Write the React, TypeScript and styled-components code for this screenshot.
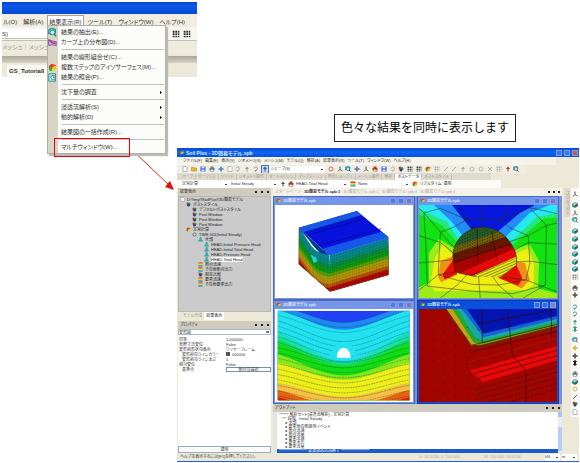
import React from "react";
import styled, { createGlobalStyle, css } from "styled-components";

const GlobalStyle = createGlobalStyle`
  * { box-sizing: border-box; }
  body { margin: 0; background: #fff; }
  button, select, input, table {
    font: inherit; color: inherit; margin: 0; padding: 0;
    border: 0; background: none; border-radius: 0; appearance: none;
  }
  button { white-space: nowrap; }
`;

const Page = styled.main`
  position: relative;
  display: flex;
  flex-direction: column;
  padding: 2px 1px 1px 2px;
  font-family: "Liberation Sans", "Noto Sans CJK JP", sans-serif;
  font-feature-settings: "palt";
  font-size: 4px;
  line-height: 6px;
  color: #333;
  white-space: nowrap;
`;

/* ---------- menu excerpt ---------- */
const TopRow = styled.div`
  display: flex;
  align-items: flex-start;
  height: 146px;
`;
const Excerpt = styled.section`
  position: relative;
  flex: 0 0 195px;
  height: 75px;
  font-size: 6px;
  line-height: 10px;
  background: #ece9d8;
`;
const ExcerptTitle = styled.div`
  height: 12px;
  background: linear-gradient(#0a40d0, #0a58e6 30%, #0848d4);
`;
const ExcerptMenuBar = styled.nav`
  display: flex;
  gap: 4px;
  height: 13px;
  padding-top: 2px;
  background: #f0eee2;
`;
const ExcerptMenu = styled.button<{ $open?: boolean }>`
  height: 11px;
  padding: 0 1px;
  ${(p) => p.$open && css`background: #fff; outline: 1px solid #a5a294;`}
`;
const ExcerptTools = styled.div`
  display: flex;
  justify-content: space-between;
  align-items: center;
  height: 13px;
  padding-right: 3px;
  background: #f6f5ee;
`;
const ExcerptField = styled.div`
  width: 46px;
  height: 10px;
  background: #fff;
  border-bottom: 1px solid #c5c2b2;
`;
const ToolCluster = styled.div`
  display: flex;
  gap: 3px;
  padding-right: 3px;
`;
const ExcerptTabs = styled.div`
  height: 13px;
  padding-top: 1px;
  color: #96948c;
  background: #eeebdf;
  border-top: 1px solid #c5c2b2;
`;
const ExcerptRule = styled.div`
  height: 7px;
  margin-top: 3px;
  background: linear-gradient(#aaa79b, #d5d2c5);
`;
const DocTab = styled.div`
  margin: 2px 0 0 5px;
  width: 56px;
  height: 12px;
  padding: 1px 2px;
  font-weight: bold;
  background: #fbfaf4;
`;
const Popup = styled.div`
  position: absolute;
  left: 45px;
  top: 23px;
  z-index: 1;
  width: 119px;
  padding: 1px 0;
  border: 1px solid #b3b0a2;
  background: linear-gradient(90deg, #d9d5c5 10px, #fcfcfa 10px);
  box-shadow: 2px 2px 1px #bbb;
`;
const PopupItem = styled.button`
  position: relative;
  display: grid;
  grid-template-columns: 13px 1fr 5px;
  align-items: center;
  width: 100%;
  height: 10px;
  text-align: left;
  line-height: 10px;
`;
const Separator = styled.hr`
  height: 1px;
  margin: 2px 1px 2px 14px;
  border: 0;
  background: #c2c0b8;
`;
const Highlight = styled.span`
  position: absolute;
  left: 6px;
  top: -4px;
  width: 76px;
  height: 19px;
  border: 1px solid #e80000;
`;
const Callout = styled.p`
  margin: 112px 0 0 137px;
  padding: 0 6px;
  height: 28px;
  border: 1px solid #222;
  font-size: 12px;
  line-height: 26px;
  font-feature-settings: normal;
  color: #000;
`;
const Arrow = styled.svg`
  position: absolute;
  left: 128px;
  top: 146px;
`;

/* ---------- application window ---------- */
const AppWindow = styled.section`
  display: flex;
  flex-direction: column;
  margin-left: 175px;
  background: #ece9d8;
  border-bottom: 1px solid #2462d8;
`;
const TitleBar = styled.header`
  display: flex;
  align-items: center;
  gap: 2px;
  height: 9px;
  padding: 0 1px 0 2px;
  color: #dce8ff;
  font-size: 5px;
  font-weight: bold;
  background: linear-gradient(#0a48d8, #0a66f2 50%, #0850dc);
`;
const Spacer = styled.span`
  flex: 1;
`;
const WinButton = styled.button<{ $tone: string }>`
  width: 6px;
  height: 6px;
  border: 1px solid #7f9fee;
  background: ${(p) => p.$tone};
`;
const MenuBar = styled.nav`
  display: flex;
  align-items: center;
  gap: 3px;
  height: 8px;
  margin-right: 23px;
  padding-left: 6px;
  background: #f5f3ea;
`;
const Bar = styled.div<{ $white?: boolean }>`
  display: flex;
  align-items: center;
  gap: 2px;
  height: 8px;
  padding: 0 5px;
  margin-right: ${(p) => (p.$white ? 78 : 54)}px;
  background: ${(p) => (p.$white ? "#fbfaf5" : "#f0eee3")};
`;
const RibbonTabs = styled.div`
  display: flex;
  align-items: center;
  height: 7px;
  padding-left: 3px;
  color: #99978e;
  background: linear-gradient(90deg, #dedbce 78%, #ece9d8 78%);
`;
const RibbonTab = styled.button<{ $on?: boolean }>`
  height: 6px;
  padding: 0 2px;
  border-right: 1px solid #c4c1b3;
  ${(p) => p.$on && css`background: #fff; color: #222;`}
`;
const Combo = styled.select<{ $w: number }>`
  width: ${(p) => p.$w}px;
  height: 7px;
  line-height: 6px;
  background:
    linear-gradient(#444, #444) right 2px center / 2px 1px no-repeat,
    #fff;
`;
const IconButton = styled.button<{ $on?: boolean }>`
  display: grid;
  place-items: center;
  width: 7px;
  height: 7px;
  ${(p) => p.$on && css`background: #c4d2ef; outline: 1px solid #5577bb;`}
`;
const Body = styled.div`
  display: grid;
  grid-template-columns: 94px minmax(0, 1fr) 15px;
  column-gap: 2px;
  height: 265px;
`;
const LeftPane = styled.aside`
  display: flex;
  flex-direction: column;
  padding-left: 1px;
`;
const PaneHead = styled.div`
  display: flex;
  align-items: center;
  gap: 4px;
  flex: none;
  height: 8px;
  padding: 0 2px;
  background: #cfccbf;
  color: #222;
`;
const PaneButton = styled.button`
  width: 2px;
  height: 2px;
  background: #222;
`;
const Tree = styled.ul`
  list-style: none;
  margin: 0;
  padding: 0 0 0 1px;
  height: 116px;
  border: 1px solid #b8b8b4;
  background: #cbcbcb;
`;
const TreeRow = styled.li<{ $depth: number }>`
  display: flex;
  align-items: center;
  gap: 2px;
  height: 5px;
  line-height: 5px;
  padding-left: ${(p) => p.$depth * 6}px;
  color: #222;
`;
const TreeLabel = styled.span<{ $on?: boolean }>`
  ${(p) => p.$on && css`background: #fff;`}
`;
const PaneTabs = styled.div`
  display: flex;
  height: 9px;
  padding: 0 3px;
  color: #96948c;
`;
const PaneTab = styled.button<{ $on?: boolean }>`
  padding: 0 2px;
  height: 8px;
  ${(p) => p.$on && css`background: #fff; color: #222;`}
`;
const PropSelect = styled.select`
  flex: none;
  height: 6px;
  line-height: 5px;
  border: 1px solid #a9b8c9;
  background: linear-gradient(#777, #777) right 1px center / 3px 2px no-repeat, #fff;
`;
const PropArea = styled.div`
  flex: 1;
  padding-top: 2px;
  background: #fff;
`;
const PropTable = styled.table`
  width: 100%;
  border-collapse: collapse;
  line-height: 5px;
`;
const PropName = styled.th<{ $sub?: boolean }>`
  width: 48px;
  height: 5px;
  padding: 0 0 0 ${(p) => (p.$sub ? 4 : 1)}px;
  font-weight: normal;
  text-align: left;
`;
const PropValue = styled.td`
  padding: 0;
`;
const Swatch = styled.span`
  display: inline-block;
  width: 4px;
  height: 4px;
  margin-right: 2px;
  background: #555;
`;
const PickButton = styled.button`
  display: block;
  width: 100%;
  height: 5px;
  line-height: 3px;
  border: 1px solid #7890b0;
`;
const ApplyButton = styled.button`
  flex: none;
  height: 7px;
  line-height: 5px;
  border: 1px solid #9aacbf;
  background: #fafafa;
`;
const Centre = styled.div`
  display: flex;
  flex-direction: column;
`;
const DocTabs = styled.div`
  display: flex;
  align-items: center;
  gap: 3px;
  height: 8px;
  padding: 0 2px;
  color: #aaa89f;
  background: #f4f2e8;
`;
const OpenTab = styled.button<{ $on?: boolean }>`
  ${(p) => p.$on && css`color: #222; font-weight: bold; background: #fff;`}
`;
const Mdi = styled.div`
  display: grid;
  grid-template-columns: 1fr 1fr;
  grid-template-rows: 104px 104px;
  column-gap: 2px;
  padding-right: 3px;
  background: #7890d8;
`;
const Child = styled.article<{ $active?: boolean }>`
  display: flex;
  flex-direction: column;
  padding: 0 2px 2px;
  background: ${(p) => (p.$active ? "#0a50dc" : "#7595e8")};
  box-shadow: inset 0 0 0 1px ${(p) => (p.$active ? "#0940b8" : "#4d68bd")};
`;
const ChildBar = styled.header`
  display: flex;
  align-items: center;
  gap: 2px;
  flex: none;
  height: 9px;
  padding: 0 1px;
  color: #dfe7ff;
  font-weight: bold;
`;
const Plot = styled.svg`
  display: block;
  flex: 1;
  width: 100%;
  min-height: 0;
  background: #fff;
`;
const Output = styled.div`
  flex: 1;
  display: grid;
  grid-template-columns: 4px 1fr 4px;
  overflow: hidden;
  background: #fff;
`;
const OutGutter = styled.div`
  background: #e4e4e0;
`;
const OutLines = styled.ol`
  list-style: none;
  margin: 0;
  padding: 1px 0 0;
`;
const OutLine = styled.li<{ $indent: number; $on?: boolean }>`
  height: 4px;
  line-height: 4px;
  padding-left: ${(p) => p.$indent}px;
  color: #333;
  ${(p) => p.$on && css`background: #1c5bcc; color: #fff;`}
`;
const Scroll = styled.div`
  display: flex;
  flex-direction: column;
  justify-content: flex-end;
  background: #e6eefc;
  border-top: 5px solid #aac4f2;
`;
const Thumb = styled.div`
  height: 24px;
  margin-bottom: 2px;
  background: #b5ccf7;
`;
const RightRail = styled.aside`
  display: flex;
  justify-content: space-between;
`;
const RailTab = styled.button`
  width: 6px;
  height: 29px;
  background: #dddacd;
  color: #888;
  writing-mode: vertical-rl;
  line-height: 6px;
`;
const RailIcons = styled.div`
  display: flex;
  flex-direction: column;
  align-items: center;
  justify-content: space-between;
  width: 8px;
  height: 229px;
  padding: 3px 0 2px;
  background: #faf9f4;
`;
const Gap = styled.span`
  flex: 0 0 2px;
`;
const Status = styled.footer`
  display: flex;
  align-items: center;
  gap: 24px;
  height: 8px;
  padding: 0 2px 0 3px;
`;
const Coord = styled.span`
  color: #a9a79c;
`;
const Units = styled.div`
  display: flex;
  gap: 2px;
`;

/* ---------- icons ---------- */
type Kind =
  | "logo" | "cube" | "grid" | "doc" | "folder" | "disk" | "print" | "arrow"
  | "line" | "ring" | "cross" | "tree" | "bands" | "dots" | "axes" | "turn" | "up" | "lens" | "pan" | "curve" | "query";

function Icon({ kind, size = 6, tone = "#4a5568" }: { kind: Kind; size?: number; tone?: string }) {
  const art: Record<Kind, React.ReactNode> = {
    logo: <><path d="M1 4 5 1l6 2-3 5H2z" fill="#e83c28" /><path d="M1 6 5 5v6L2 10z" fill="#18a848" /><path d="m5 6 6-3v5l-5 3z" fill="#f0c818" /></>,
    cube: <><path d="m1 4 5-3 5 2-5 3z" fill="#9eeef0" /><path d="m1 4 5 2v5L1 9z" fill={tone} /><path d="m6 6 5-3v5l-5 3z" fill="#087078" /><path d="m1 4 5-3 5 2v5l-5 3-5-2z" fill="none" stroke="#234" /></>,
    grid: <><path d="M1 1h10v10H1z" fill="#fff" /><path d="M1 1h3v3H1zM5 1h3v3H5zM9 1h2v3H9zM1 5h3v3H1zM5 5h3v3H5zM9 5h2v3H9zM1 9h3v2H1zM5 9h3v2H5zM9 9h2v2H9z" fill={tone} /></>,
    doc: <path d="M2 1h6l2 2v8H2z" fill="#fff" stroke="#678" />,
    folder: <path d="M1 3h4l1 1h5v6H1z" fill="#f0b830" stroke="#a87008" />,
    disk: <><path d="M1 1h10v10H1z" fill="#2558c8" /><path d="M3 1h6v4H3zM3 7h6v4H3z" fill="#dce8ff" /></>,
    print: <><path d="M3 1h6v3H3zM1 4h10v5H1z" fill={tone} /><path d="M3 7h6v4H3z" fill="#fff" stroke={tone} /></>,
    arrow: <path d="m6 1 4 5H7v5H5V6H2z" fill={tone} />,
    line: <path d="M2 10 10 2" stroke={tone} strokeWidth="2" />,
    ring: <circle cx="6" cy="6" r="4" fill="none" stroke={tone} strokeWidth="1.5" />,
    cross: <path d="m2 2 8 8m0-8-8 8" stroke={tone} strokeWidth="2" />,
    tree: <path d="M5 1h3v4l3 5H1l3-4z" fill="#20c8b8" stroke="#287888" />,
    bands: <><path d="M1 1h10v3H1z" fill="#e83030" /><path d="M1 4h10v3H1z" fill="#f0e020" /><path d="M1 7h10v2H1z" fill="#28c848" /><path d="M1 9h10v2H1z" fill="#2878e8" /></>,
    dots: <><circle cx="4" cy="4" r="3" fill="#d03028" /><circle cx="8" cy="5" r="3" fill="#20a040" /><circle cx="6" cy="8" r="3" fill="#223a98" /></>,
    axes: <><path d="M6 7V1" stroke="#2048d0" strokeWidth="2" /><path d="m6 7-4 4" stroke="#d02020" strokeWidth="2" /><path d="m6 7 5 3" stroke="#18a030" strokeWidth="2" /></>,
    turn: <><path d="M2 5c1-4 7-4 7 0 0 3-3 3-4 6" fill="none" stroke={tone} strokeWidth="2" /><path d="M2 8h6l-3 3z" fill={tone} /></>,
    up: <path d="m6 0 5 4H8v4h3l-5 4-5-4h3V4H1z" fill={tone} />,
    lens: <><path d="M0 3 5 0l5 2v5L5 9 0 7z" fill="#3cc8cc" stroke="#18686c" /><circle cx="6" cy="6" r="3" fill="#e8f4fa" stroke={tone} /><path d="m8 8 3 3" stroke={tone} strokeWidth="2" /></>,
    pan: <path d="M6 0 8 3H7v2h2V4l3 2-3 2V7H7v2h1l-2 3-2-3h1V7H3v1L0 6l3-2v1h2V3H4z" fill={tone} />,
    curve: <><path d="M0 2 6 4l5 1v5l-5-1-5 1z" fill="#b8a8e8" stroke="#6048b0" /><path d="M1 3c3 0 3 5 9 4" fill="none" stroke="#d03048" strokeWidth="2" /></>,
    query: <><path d="M1 1h9v10H1z" fill="#a8e8ec" stroke="#187880" /><circle cx="7" cy="6" r="3" fill="#fff" stroke="#187880" /><path d="M7 4v2h2" fill="none" stroke="#234" /></>,
  };
  return <svg width={size} height={size} viewBox="0 0 12 12" aria-hidden="true">{art[kind]}</svg>;
}

/* ---------- contour plots ---------- */
const range = (n: number) => Array.from({ length: n }, (_, i) => i);

function BlockPlot() {
  const tones = ["#08889c", "#0a8a78", "#0a8c40", "#0b9a12", "#5c9c08", "#a89c08", "#c08a08", "#b85408", "#b00808"];
  const at = [0, 15, 28, 40, 54, 64, 74, 86, 96];
  return (
    <Plot viewBox="20 62 418 277" preserveAspectRatio="none" role="img" aria-label="地盤モデル">
      <defs>
        <clipPath id="blockLeft"><path d="M92 130 185 212 187 320 92 238z" /></clipPath>
        <clipPath id="blockRight"><path d="M185 212 364 158V270L187 320z" /></clipPath>
      </defs>
      <g clipPath="url(#blockRight)">
        {tones.map((c, i) => <path key={c} d={`M185 ${212 + at[i]} 366 ${157 + at[i]}V400H185z`} fill={c} />)}
        {range(13).map((i) => <path key={i} d={`M185 ${218 + i * 8} 366 ${164 + i * 8}`} stroke="#15382c" strokeWidth="2" strokeDasharray="4 3" opacity=".4" />)}
        {range(17).map((i) => <path key={i} d={`M${196 + i * 10} 140V340`} stroke="#15382c" opacity=".25" />)}
      </g>
      <g clipPath="url(#blockLeft)">
        {tones.map((c, i) => <path key={c} d={`M90 ${126 + at[i]}C120 ${165 + at[i]} 132 ${196 + at[i] * 0.9} 152 ${201 + at[i]}S175 ${208 + at[i]} 190 ${214 + at[i]}V400H90z`} fill={c} />)}
        <path d="M92 130 185 212 160 206C135 190 128 165 92 134z" fill="#083c90" />
        <path d="M128 210 145 218 148 231 137 234z" fill="#28dce0" />
        {range(13).map((i) => <path key={i} d={`M92 ${138 + i * 8}Q130 ${185 + i * 8} 187 ${219 + i * 8}`} fill="none" stroke="#153c40" strokeWidth="2" strokeDasharray="4 3" opacity=".35" />)}
        {range(8).map((i) => <path key={i} d={`M${102 + i * 11} 130V320`} stroke="#153c40" opacity=".3" />)}
      </g>
      <path d="M92 130 268 80 364 158 185 212z" fill="#0712df" />
      <path d="M92 130 268 80 284 93 108 144z" fill="#1557e8" />
      <path d="M164 192 344 142 364 158 185 212z" fill="#1557e8" />
      <path d="M108 144 284 93M118 153 294 101M150 184 342 133" stroke="#06087c" strokeWidth="2" fill="none" />
      <path d="M92 130V238L187 320 364 270V158" fill="none" stroke="#703038" />
    </Plot>
  );
}

function TunnelPlot() {
  return (
    <Plot viewBox="15 65 417 273" preserveAspectRatio="none" role="img" aria-label="トンネル断面">
      <defs><clipPath id="bore"><path d="M117 215C120 165 160 130 205 130S285 155 305 200Q313 222 309 242L262 277 190 276 123 262z" /></clipPath></defs>
      <path d="M0 0h450v400H0z" fill="#12e212" />
      <path d="M0 45H450V100L390 105 290 190 130 175 85 125 0 85z" fill="#24e87c" />
      <path d="M15 65H432V88L370 100 285 180H145L100 115 15 75z" fill="#25eaf4" />
      <path d="M60 65H410L350 88 270 165H155L112 112z" fill="#248cf8" />
      <path d="M115 65H365L318 90 250 145H180z" fill="#0716dc" />
      <path d="M15 308 45 290 45 205 75 165 118 190 300 195 350 180 378 230 375 310 432 325V338H15z" fill="#9dec18" />
      <path d="M48 303 62 225 87 180 120 215 305 210 343 193 362 235 362 300 338 315 65 318z" fill="#eeee12" />
      <path d="M73 277 80 230 118 215V275L82 292zM307 230 335 235 350 285 325 310 260 280z" fill="#f09018" />
      <path d="M87 268 119 225 130 268 92 284zM307 235 327 280 315 302 255 279z" fill="#e60c08" />
      <g clipPath="url(#bore)">
        <path d="M100 100H330V300H100z" fill="#a40500" />
        <path d="M100 110H320V132L110 205z" fill="#245c28" />
        <path d="M100 195 320 122V148L105 222z" fill="#746000" />
        <path d="M100 214 315 146V174L105 238z" fill="#651600" />
        <path d="M130 268 315 188V218L140 280z" fill="#e40a08" />
        <path d="M160 280 315 214V245L260 280z" fill="#e6e418" />
        {range(6).map((i) => <path key={i} d={`M${165 + i * 20} 280 315 ${218 + i * 8}`} stroke="#656810" strokeWidth="2" />)}
        {range(8).map((i) => <path key={i} d={`M115 ${162 + i * 8} 300 ${95 + i * 8}`} stroke="#183020" strokeWidth="3" strokeDasharray="3 5" />)}
        <path d="M190 135 193 230M235 145 250 225M120 235 305 175" stroke="#400" strokeWidth="2" />
      </g>
      <g fill="none" stroke="#203018" strokeWidth="2" opacity=".75">
        <path d="M117 215C120 165 160 130 205 130S285 155 305 200Q313 222 309 242L262 277M123 262 190 276M123 262 117 215" />
        <path d="M30 88 80 75 160 108 205 104 260 110 348 72 400 125 397 300 330 338M30 88 36 180 40 303 175 318 300 325 397 300" />
        <path d="M80 145 120 130 160 108 180 135M80 145 75 225 73 270 175 298 255 300 338 285 350 235 345 155 290 132 260 110 232 136" />
        <path d="M15 75 30 88 80 145 121 190M15 155 80 175 118 205M15 235 75 230 117 225M15 315 73 270 123 262M80 338 130 300 160 270M200 338 195 276M300 338 255 300 240 278M432 320 338 285 270 277M432 240 350 230 309 232M432 180 345 175 303 198M432 118 400 125 345 155 290 172M135 65 160 108M205 65V130M290 65 260 110M348 72 432 90" />
      </g>
    </Plot>
  );
}

const dip = (left: number, mid: number) =>
  `M28 ${left}C95 ${left + (mid - left) * 0.3} 160 ${mid} 228 ${mid}S361 ${left + (mid - left) * 0.3} 428 ${left}`;

function SectionPlot() {
  const layers: [string, number, number][] = [
    ["#1e88f4", 30, 83], ["#22e2f2", 44, 105], ["#18e0b0", 110, 197], ["#12dc50", 132, 207], ["#10dc12", 145, 214],
    ["#86e81c", 178, 241], ["#eeee18", 202, 254], ["#f8c040", 262, 304], ["#e86010", 284, 334], ["#e01808", 306, 352],
  ];
  return (
    <Plot viewBox="20 43 418 277" preserveAspectRatio="none" role="img" aria-label="浸透流断面">
      <defs><clipPath id="section"><path d="M28 48H428V315H28z" /></clipPath></defs>
      <g clipPath="url(#section)">
        <path d="M28 48H428V315H28z" fill="#2040f4" />
        {layers.map(([c, l, m]) => <path key={c} d={`${dip(l, m)}V400H28z`} fill={c} />)}
        {range(18).map((i) => <path key={i} d={dip(30 + i * 16, 83 + i * 15 + (i > 2 && i < 8 ? 12 : 0))} fill="none" stroke="#185048" strokeWidth="2" strokeDasharray={i % 2 ? "6 2" : "3 2"} opacity=".65" />)}
        <path d="M185 182Q205 140 228 140T271 182" fill="#22e2f2" />
      </g>
      <path d="M207 188C207 150 249 150 249 188z" fill="#fff" />
    </Plot>
  );
}

function CornerPlot() {
  return (
    <Plot viewBox="15 45 417 277" preserveAspectRatio="none" role="img" aria-label="拡大表示">
      <path d="M0 0h450v400H0z" fill="#a00500" />
      <path d="M94 45H432V103L205 158 170 158z" fill="#682800" />
      <path d="M98 45H432V94L208 151 174 153z" fill="#c8a010" />
      <path d="M116 45H432V91L208 149 180 145z" fill="#20a830" />
      <path d="M130 45H432V83L210 139 190 135z" fill="#18a8a8" />
      <path d="M144 45H432V75L210 129z" fill="#1860d8" />
      <path d="M160 45H432V66L210 118z" fill="#0414b0" />
      <path d="M168 228 432 155V198L208 263z" fill="#e80808" />
      <g fill="none" stroke="#3a0805" strokeWidth="2">
        <path d="M174 153 432 91M206 45V145M190 90 432 45M282 45 298 185 338 228V322M415 45V130M168 174 432 112" />
        <path d="M182 237 432 168M195 250 432 184" />
        <path d="M168 202 432 132" stroke="#b03828" strokeDasharray="3 4" />
        {range(5).map((i) => <path key={i} d={`M${185 + i * 8} ${285 + i * 14} 432 ${216 + i * 17}`} strokeDasharray="9 5" />)}
        {range(6).map((i) => <path key={i} d={`M${24 + i * 34} ${70 + i * 7}V322`} strokeDasharray="3 27" />)}
      </g>
    </Plot>
  );
}

/* ---------- data ---------- */
type Entry = { icon?: Kind; text: string; more?: boolean; mark?: boolean };
const popup: Entry[][] = [
  [{ icon: "lens", text: "結果の抽出(E)..." }, { icon: "curve", text: "カーブ上の分布図(D)..." }],
  [{ text: "結果の線形組合せ(C)..." }, { icon: "logo", text: "複数ステップのアイソサーフェス(M)..." }, { icon: "query", text: "結果の照会(P)..." }],
  [{ text: "沈下量の調査", more: true }],
  [{ text: "浸透流解析(S)", more: true }, { text: "動的解析(D)", more: true }],
  [{ text: "結果図の一括作成(R)..." }],
  [{ text: "マルチウィンドウ(W)...", mark: true }],
];
const menus = ["ファイル(F)", "編集(E)", "表示(V)", "ジオメトリ(G)", "メッシュ(M)", "モデル(Q)", "解析(A)", "結果表示(R)", "ツール(T)", "ウィンドウ(W)", "ヘルプ(H)"];
const ribbon = ["カーブ", "サーフェス", "ソリッド", "ジオメトリ操作", "オートメッシュ", "マップメッシュ", "押出しメッシュ", "メッシュ操作", "解析", "ポストデータ", "ポストスタイル"];
const tree: [number, Kind, string][] = [
  [0, "doc", "D:¥tmp¥SoilPlus¥3D簡易モデル"], [1, "dots", "ポストスタイル"], [2, "dots", "デフォルトポストスタイル"],
  [2, "dots", "Post Window"], [2, "dots", "Post Window"], [2, "dots", "Post Window"], [1, "logo", "定常計算"],
  [2, "ring", "TIME 001(Initial Steady)"], [3, "tree", "水頭"], [4, "tree", "HEAD-Initial Pressure Head"],
  [4, "tree", "HEAD-Initial Total Head"], [4, "tree", "HEAD-Pressure Head"], [4, "tree", "HEAD-Total Head"],
  [3, "bands", "節点流速"], [3, "bands", "その他節点出力"], [3, "dots", "相互比較"], [3, "bands", "要素流速"], [3, "bands", "その他要素出力"],
];
const props: [string, string, boolean][] = [
  ["倍率", "1.000000", false], ["実際寸法変位", "False", false], ["変形前形状の表示", "ワイヤーフレーム", false],
  ["変形前のラインカラー", "000000", true], ["変形前のライン太さ", "1", true], ["相対変位", "False", false], ["基準点", "節点の選択", true],
];
const output: [number, string][] = [
  [2, "****** 解析セット[浸透流解析] - 定常計算"], [5, "*** 段階 - Initial Steady"], [8, "● 水頭"], [8, "● 要素他の節接用イベント"],
  [8, "● 節点流速"], [8, "● 節点流量"], [8, "● 要素流速"], [8, "● 要素水圧"], [8, "● 要素流量"],
];
type Tool = [Kind, string];
const tools: Tool[] = [
  ["doc", "#456"], ["folder", "#456"], ["disk", "#456"], ["print", "#6a7890"], ["pan", "#3070c0"], ["doc", "#777"], ["turn", "#aaa"], ["arrow", "#999"], ["turn", "#999"],
];
const tools2: Tool[] = [
  ["ring", "#c04040"], ["axes", "#333"], ["lens", "#205090"], ["pan", "#3060a0"], ["axes", "#333"], ["print", "#b04020"], ["disk", "#333"], ["turn", "#aaa"], ["dots", "#333"],
  ["grid", "#444"], ["grid", "#444"], ["logo", "#333"], ["grid", "#aaa"], ["line", "#aaa"], ["line", "#aaa"], ["arrow", "#aaa"], ["ring", "#aaa"], ["ring", "#aaa"], ["cross", "#aaa"], ["grid", "#aaa"], ["arrow", "#b03030"], ["lens", "#804040"],
];
const rail: (Tool | null)[] = [
  ["axes", ""], null, ["cube", "#30c050"], ["axes", ""], ["lens", "#2070b0"], null, ["cube", "#20c0c8"], ["cube", "#20c0c8"], ["cube", "#20c0c8"], ["cube", "#20c0c8"],
  ["cube", "#20c0c8"], ["cube", "#20c0c8"], ["grid", "#889"], null, ["print", "#556"], ["pan", "#402818"], null, ["turn", "#2898b0"], ["turn", "#20a0a0"], ["arrow", "#20a870"],
  ["up", "#20a870"], null, ["lens", "#667"], ["pan", "#c8a818"], ["pan", "#222"], ["up", "#222"], null, ["print", "#678"], ["cube", "#109898"], ["ring", "#c8a010"], ["line", "#b04848"], ["dots", ""], ["doc", "#678"],
];

function Tools({ items, on }: { items: Tool[]; on?: number }) {
  return <>{items.map(([kind, tone], i) => <IconButton key={i} $on={i === on} aria-label={kind}><Icon kind={kind} tone={tone} /></IconButton>)}</>;
}
function PaneControls() {
  return <><Spacer /><PaneButton aria-label="メニュー" /><PaneButton aria-label="固定" /><PaneButton aria-label="閉じる" /></>;
}
function ChildWindow({ active, children }: { active?: boolean; children: React.ReactNode }) {
  const tone = active ? "#2b6df0" : "#5577d8";
  return (
    <Child $active={active}>
      <ChildBar>
        <Icon kind="logo" size={5} />3D簡易モデル.spb<Spacer />
        <WinButton $tone={tone} aria-label="最小化" /><WinButton $tone={tone} aria-label="最大化" /><WinButton $tone={active ? "#8a80b8" : "#8a70b0"} aria-label="閉じる" />
      </ChildBar>
      {children}
    </Child>
  );
}

export default function App() {
  return (
    <>
      <GlobalStyle />
      <Page>
        <TopRow>
          <Excerpt>
            <ExcerptTitle />
            <ExcerptMenuBar>
              <ExcerptMenu>ル(O)</ExcerptMenu><ExcerptMenu>解析(A)</ExcerptMenu><ExcerptMenu $open>結果表示(R)</ExcerptMenu>
              <ExcerptMenu>ツール(T)</ExcerptMenu><ExcerptMenu>ウィンドウ(W)</ExcerptMenu><ExcerptMenu>ヘルプ(H)</ExcerptMenu>
            </ExcerptMenuBar>
            <ExcerptTools>
              <ExcerptField>S)</ExcerptField>
              <ToolCluster><Icon kind="grid" size={8} tone="#333" /><Icon kind="grid" size={8} tone="#333" /></ToolCluster>
            </ExcerptTools>
            <ExcerptTabs>メッシュ｜メッシュ操作</ExcerptTabs>
            <ExcerptRule />
            <DocTab>GS_TutorialI</DocTab>
            <Popup role="menu">
              {popup.map((group, g) => (
                <React.Fragment key={g}>
                  {g > 0 && <Separator />}
                  {group.map((item) => (
                    <PopupItem key={item.text} role="menuitem">
                      {item.icon ? <Icon kind={item.icon} size={9} tone="#18808c" /> : <span />}
                      <span>{item.text}</span>
                      {item.more && <svg width="2" height="3" viewBox="0 0 2 3" aria-hidden="true"><path d="M0 0 2 1.5 0 3z" /></svg>}
                      {item.mark && <Highlight />}
                    </PopupItem>
                  ))}
                </React.Fragment>
              ))}
            </Popup>
          </Excerpt>
          <Callout>色々な結果を同時に表示します</Callout>
        </TopRow>

        <AppWindow>
          <TitleBar>
            <Icon kind="logo" size={5} />Soil Plus - 3D簡易モデル.spb<Spacer />
            <WinButton $tone="#3b74ea" aria-label="最小化" /><WinButton $tone="#3b74ea" aria-label="最大化" /><WinButton $tone="#e2502c" aria-label="閉じる" />
          </TitleBar>
          <MenuBar>{menus.map((m) => <button key={m}>{m}</button>)}</MenuBar>
          <Bar>
            <Tools items={tools} />
            <IconButton $on aria-label="選択"><Icon kind="arrow" tone="#2858a8" /></IconButton>
            <Combo $w={56} aria-label="選択対象"><option>シェープ(S)</option></Combo>
            <Tools items={tools2} />
          </Bar>
          <RibbonTabs>{ribbon.map((r) => <RibbonTab key={r} $on={r === "ポストデータ"}>{r}</RibbonTab>)}</RibbonTabs>
          <Bar $white>
            <Combo $w={47} aria-label="解析セット"><option>定常計算</option></Combo>
            <Combo $w={47} aria-label="段階"><option>Initial Steady</option></Combo>
            <Icon kind="arrow" /><Icon kind="print" tone="#a04040" />
            <Combo $w={52} aria-label="結果"><option>HEAD-Total Head</option></Combo>
            <Icon kind="bands" />
            <Combo $w={52} aria-label="ベクトル"><option>None</option></Combo>
            <Icon kind="logo" />
            <button>リアルタイム</button><button>適用</button>
          </Bar>
          <Body>
            <LeftPane>
              <PaneHead>結果表示<PaneControls /></PaneHead>
              <Tree>
                {tree.map(([depth, icon, label], i) => (
                  <TreeRow key={i} $depth={depth}><Icon kind={icon} size={5} tone="#456" /><TreeLabel $on={label === "HEAD-Total Head"}>{label}</TreeLabel></TreeRow>
                ))}
              </Tree>
              <PaneTabs><PaneTab>モデル作成</PaneTab><PaneTab $on>結果表示</PaneTab></PaneTabs>
              <PaneHead>プロパティ<PaneControls /></PaneHead>
              <PropSelect aria-label="プロパティ"><option>変形図</option></PropSelect>
              <PropArea>
                <PropTable>
                  <tbody>
                    {props.map(([name, value, sub]) => (
                      <tr key={name}>
                        <PropName $sub={sub} scope="row">{name}</PropName>
                        <PropValue>
                          {value === "000000" && <Swatch />}
                          {name === "基準点" ? <PickButton>{value}</PickButton> : value}
                        </PropValue>
                      </tr>
                    ))}
                  </tbody>
                </PropTable>
              </PropArea>
              <ApplyButton>適用</ApplyButton>
            </LeftPane>
            <Centre>
              <DocTabs>
                <OpenTab>スタートページ</OpenTab><OpenTab $on>3D簡易モデル.spb:1</OpenTab><OpenTab>3D簡易モデル.spb:2</OpenTab>
                <OpenTab>3D簡易モデル.spb:3</OpenTab><OpenTab>3D簡易モデル.spb:4</OpenTab><PaneControls />
              </DocTabs>
              <Mdi>
                <ChildWindow><BlockPlot /></ChildWindow>
                <ChildWindow><TunnelPlot /></ChildWindow>
                <ChildWindow><SectionPlot /></ChildWindow>
                <ChildWindow active><CornerPlot /></ChildWindow>
              </Mdi>
              <PaneHead>アウトプット<PaneControls /></PaneHead>
              <Output>
                <OutGutter />
                <OutLines>
                  {output.map(([indent, text]) => <OutLine key={text} $indent={indent}>{text}</OutLine>)}
                  <OutLine $indent={2} $on>****************** 結果読み込み終了 ******************</OutLine>
                </OutLines>
                <Scroll><Thumb /></Scroll>
              </Output>
            </Centre>
            <RightRail>
              <RailTab>プロジェクト</RailTab>
              <RailIcons>{rail.map((r, i) => (r ? <Icon key={i} kind={r[0]} tone={r[1]} size={6} /> : <Gap key={i} />))}</RailIcons>
            </RightRail>
          </Body>
          <Status>
            ヘルプを表示するには[F1]を押してください。<Spacer />
            <Coord>G: 30.5136, 0, 100.000</Coord><Coord>W: 100.000, 30.5136</Coord>
            <Units><Combo $w={15} aria-label="力の単位"><option>kN</option></Combo><Combo $w={15} aria-label="長さの単位"><option>m</option></Combo></Units>
          </Status>
        </AppWindow>
        <Arrow width="50" height="48" viewBox="0 0 50 48" aria-hidden="true">
          <path d="M1 1 42 40" stroke="#e02018" fill="none" />
          <path d="m46 44-9-3 5-6z" fill="#e01008" />
        </Arrow>
      </Page>
    </>
  );
}
